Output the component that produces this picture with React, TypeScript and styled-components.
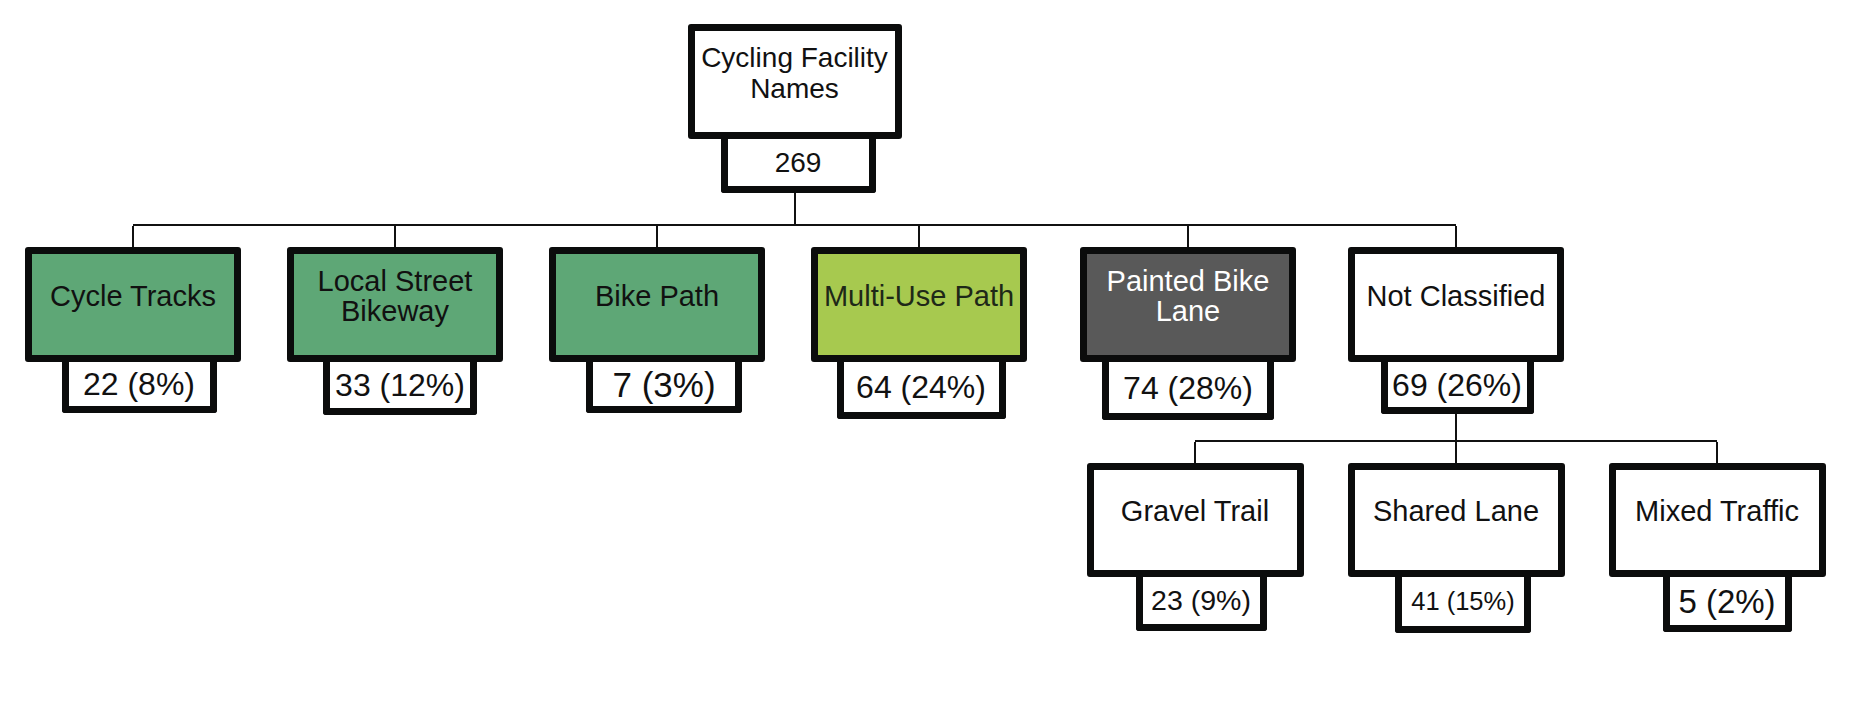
import React from 'react';
import styled, { createGlobalStyle } from 'styled-components';

interface Facility {
  label: React.ReactNode;
  value: string;
  bg?: string;
  fg?: string;
  vw: number;
  vh: number;
  shift: number;
  fs: number;
  push?: number;
  children?: Facility[];
}

const GlobalStyle = createGlobalStyle`
  html, body {
    margin: 0;
    padding: 0;
    background: #ffffff;
  }
  body {
    font-family: "Liberation Sans", Arial, Helvetica, sans-serif;
  }
`;

const Page = styled.div`
  width: 1858px;
  height: 708px;
  box-sizing: border-box;
  padding: 24px 0 0 25px;
  background: #ffffff;
  overflow: hidden;
`;

const Tree = styled.div`
  display: inline-flex;
  flex-direction: column;
  align-items: center;
`;

const Node = styled.div`
  display: flex;
  flex-direction: column;
  align-items: center;
`;

const Box = styled.div<{ $bg: string; $fg: string; $w: number; $h: number; $fs: number }>`
  box-sizing: border-box;
  width: ${({ $w }) => $w}px;
  height: ${({ $h }) => $h}px;
  border: 7px solid #0b0c0c;
  border-radius: 3px;
  background-color: ${({ $bg }) => $bg};
  color: ${({ $fg }) => $fg};
  display: flex;
  align-items: center;
  justify-content: center;
  text-align: center;
  padding: 0 0 18px;
  font-size: ${({ $fs }) => $fs}px;
  line-height: 30px;
  white-space: nowrap;
`;

const ValueBox = styled.div<{ $w: number; $h: number; $shift: number; $fs: number }>`
  box-sizing: border-box;
  width: ${({ $w }) => $w}px;
  height: ${({ $h }) => $h}px;
  margin-left: ${({ $shift }) => $shift * 2}px;
  border: 7px solid #0b0c0c;
  border-top: 0;
  border-radius: 0 0 3px 3px;
  background-color: #ffffff;
  color: #111111;
  display: flex;
  align-items: center;
  justify-content: center;
  font-size: ${({ $fs }) => $fs}px;
  line-height: 1;
  white-space: nowrap;
`;

const Stem = styled.div<{ $h: number }>`
  width: 2px;
  height: ${({ $h }) => $h}px;
  background-color: #111111;
`;

const Group = styled.div`
  display: flex;
  flex-direction: column;
  align-items: stretch;
`;

const Bar = styled.div<{ $inset: number }>`
  height: 2px;
  margin: 0 ${({ $inset }) => $inset}px;
  background-color: #111111;
`;

const Row = styled.div<{ $gap: number }>`
  display: flex;
  align-items: flex-start;
  gap: ${({ $gap }) => $gap}px;
`;

const Branch = styled.div<{ $w: number; $push: number }>`
  width: ${({ $w }) => $w}px;
  margin-left: ${({ $push }) => $push}px;
  display: flex;
  flex-direction: column;
  align-items: center;
`;

const notClassified: Facility[] = [
  { label: 'Gravel Trail', value: '23 (9%)', vw: 131, vh: 54, shift: 6, fs: 28.5 },
  { label: 'Shared Lane', value: '41 (15%)', vw: 136, vh: 56, shift: 7, fs: 25.5 },
  { label: 'Mixed Traffic', value: '5 (2%)', vw: 129, vh: 55, shift: 10, fs: 33 },
];

const facilities: Facility[] = [
  { label: 'Cycle Tracks', value: '22 (8%)', bg: '#5ea776', vw: 155, vh: 51, shift: 6, fs: 32 },
  {
    label: <>Local Street<br />Bikeway</>,
    value: '33 (12%)',
    bg: '#5ea776',
    vw: 154,
    vh: 53,
    shift: 5,
    fs: 32,
  },
  { label: 'Bike Path', value: '7 (3%)', bg: '#5ea776', vw: 156, vh: 51, shift: 7, fs: 35 },
  {
    label: 'Multi-Use Path',
    value: '64 (24%)',
    bg: '#a7c94f',
    fg: '#1e2818',
    vw: 169,
    vh: 57,
    shift: 2,
    fs: 32,
  },
  {
    label: <>Painted Bike<br />Lane</>,
    value: '74 (28%)',
    bg: '#595959',
    fg: '#ffffff',
    vw: 172,
    vh: 58,
    shift: 0,
    fs: 32,
    push: 7,
  },
  {
    label: 'Not Classified',
    value: '69 (26%)',
    vw: 153,
    vh: 52,
    shift: 1,
    fs: 32,
    push: 6,
    children: notClassified,
  },
];

const FacilityBranch: React.FC<{ item: Facility; width: number; height: number }> = ({
  item,
  width,
  height,
}) => (
  <Branch $w={width} $push={item.push ?? 0}>
    <Stem $h={21} />
    <Box $bg={item.bg ?? '#ffffff'} $fg={item.fg ?? '#111111'} $w={width} $h={height} $fs={29}>
      <span>{item.label}</span>
    </Box>
    <ValueBox $w={item.vw} $h={item.vh} $shift={item.shift} $fs={item.fs}>
      {item.value}
    </ValueBox>
    {item.children && (
      <>
        <Stem $h={26} />
        <Group>
          <Bar $inset={108.5} />
          <Row $gap={44}>
            {item.children.map((child) => (
              <FacilityBranch key={child.value} item={child} width={217} height={114} />
            ))}
          </Row>
        </Group>
      </>
    )}
  </Branch>
);

const App: React.FC = () => (
  <>
    <GlobalStyle />
    <Page>
      <Tree>
        <Node>
          <Box $bg="#ffffff" $fg="#111111" $w={214} $h={115} $fs={28}>
            <span style={{ lineHeight: '31px' }}>
              Cycling Facility
              <br />
              Names
            </span>
          </Box>
          <ValueBox $w={155} $h={54} $shift={3.5} $fs={28}>
            269
          </ValueBox>
          <Stem $h={31} />
        </Node>
        <Group>
          <Bar $inset={108} />
          <Row $gap={46}>
            {facilities.map((item) => (
              <FacilityBranch key={item.value} item={item} width={216} height={115} />
            ))}
          </Row>
        </Group>
      </Tree>
    </Page>
  </>
);

export default App;
